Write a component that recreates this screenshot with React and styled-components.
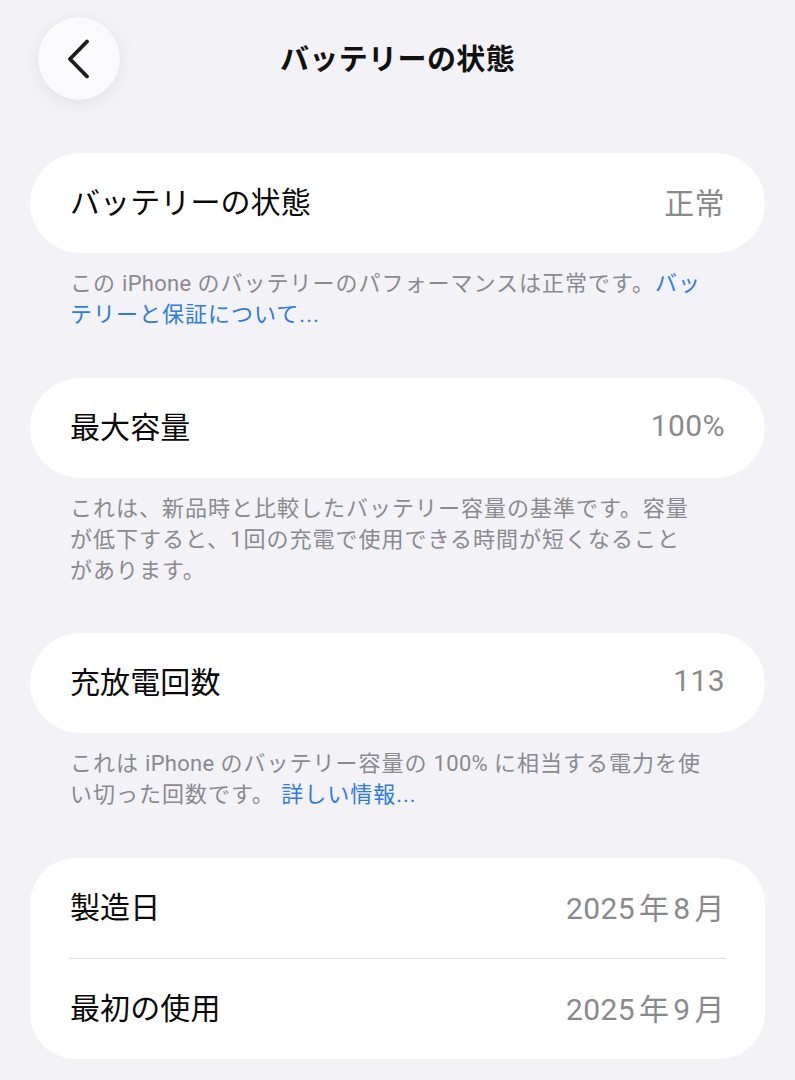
import React from "react";
import styled, { createGlobalStyle } from "styled-components";

const GlobalStyle = createGlobalStyle`
  html, body {
    margin: 0;
    padding: 0;
    background: #f2f2f7;
  }
  body {
    font-family: "Roboto", "Noto Sans CJK JP", sans-serif;
    color: #000;
    -webkit-font-smoothing: antialiased;
  }
`;

const Page = styled.div`
  padding: 17px 30px 0;
  box-sizing: border-box;
  width: 795px;
`;

const Header = styled.header`
  display: grid;
  grid-template-columns: 90px 1fr 90px;
  align-items: center;
  height: 83px;
  margin-bottom: 53px;
`;

const BackButton = styled.button`
  margin-left: 8px;
  width: 82px;
  height: 83px;
  border-radius: 50%;
  border: none;
  padding: 0;
  background: #fafafc;
  box-shadow: 0 4px 18px rgba(0, 0, 0, 0.07), 0 0 2px rgba(0, 0, 0, 0.03);
  display: flex;
  align-items: center;
  justify-content: center;
  cursor: pointer;
`;

const Title = styled.h1`
  margin: 0 0 3px;
  text-align: center;
  font-size: 29px;
  font-weight: 700;
  letter-spacing: 0.4px;
  color: #111;
`;

const Section = styled.section`
  margin-bottom: ${(p) => p.$after ?? 48}px;
`;

const Card = styled.div`
  background: #fff;
  border-radius: ${(p) => (p.$group ? "46px" : "50px")};
  overflow: hidden;
`;

const Row = styled.div`
  display: flex;
  align-items: center;
  justify-content: space-between;
  height: 100px;
  padding: 0 40px 7px 40px;
  box-sizing: border-box;
`;

const Separator = styled.div`
  height: 1px;
  background: #dedee2;
  margin: 0 39px 0 38px;
`;

const Label = styled.span`
  font-size: 30px;
  font-weight: 400;
  color: #0a0a0a;
  letter-spacing: 0.1px;
`;

const Value = styled.span`
  font-size: 30px;
  color: #8a8a8e;
  letter-spacing: 0.4px;
  padding-top: 2px;
`;

const Unit = styled.span`
  margin: 0 ${(p) => p.$right ?? 4}px 0 ${(p) => p.$left ?? 4}px;
`;

const Footer = styled.p`
  margin: 0;
  padding: 15px 40px 0;
  font-size: 22px;
  line-height: 31px;
  letter-spacing: 1px;
  color: #8a8a8f;
`;

const Latin = styled.span`
  margin: 0 6px;
  letter-spacing: 0.3px;
`;

const Link = styled.a`
  color: #2f7be0;
  text-decoration: none;
`;

const Chevron = () => (
  <svg width="24" height="40" viewBox="0 0 24 40" fill="none">
    <path
      d="M20 2.5 L3 20 L20 37.5"
      stroke="#1c1c1e"
      strokeWidth="3.8"
      strokeLinecap="round"
      strokeLinejoin="round"
    />
  </svg>
);

const DateValue = ({ year, month }) => (
  <Value>
    {year}
    <Unit>年</Unit>
    {month}
    <Unit $right={0}>月</Unit>
  </Value>
);

export default function App() {
  return (
    <>
      <GlobalStyle />
      <Page>
        <Header>
          <BackButton aria-label="戻る">
            <Chevron />
          </BackButton>
          <Title>バッテリーの状態</Title>
          <span />
        </Header>

        <Section>
          <Card>
            <Row>
              <Label>バッテリーの状態</Label>
              <Value>正常</Value>
            </Row>
          </Card>
          <Footer>
            この<Latin>iPhone</Latin>のバッテリーのパフォーマンスは正常です。<Link>バッ
            <br />
            テリーと保証について...</Link>
          </Footer>
        </Section>

        <Section $after={47}>
          <Card>
            <Row>
              <Label>最大容量</Label>
              <Value>100%</Value>
            </Row>
          </Card>
          <Footer>
            これは、新品時と比較したバッテリー容量の基準です。容量
            <br />
            が低下すると、1回の充電で使用できる時間が短くなること
            <br />
            があります。
          </Footer>
        </Section>

        <Section>
          <Card>
            <Row>
              <Label>充放電回数</Label>
              <Value>113</Value>
            </Row>
          </Card>
          <Footer>
            これは<Latin>iPhone</Latin>のバッテリー容量の<Latin>100%</Latin>に相当する電力を使
            <br />
            い切った回数です。 <Link>詳しい情報...</Link>
          </Footer>
        </Section>

        <Section>
          <Card $group>
            <Row>
              <Label>製造日</Label>
              <DateValue year="2025" month="8" />
            </Row>
            <Separator />
            <Row>
              <Label>最初の使用</Label>
              <DateValue year="2025" month="9" />
            </Row>
          </Card>
        </Section>
      </Page>
    </>
  );
}
